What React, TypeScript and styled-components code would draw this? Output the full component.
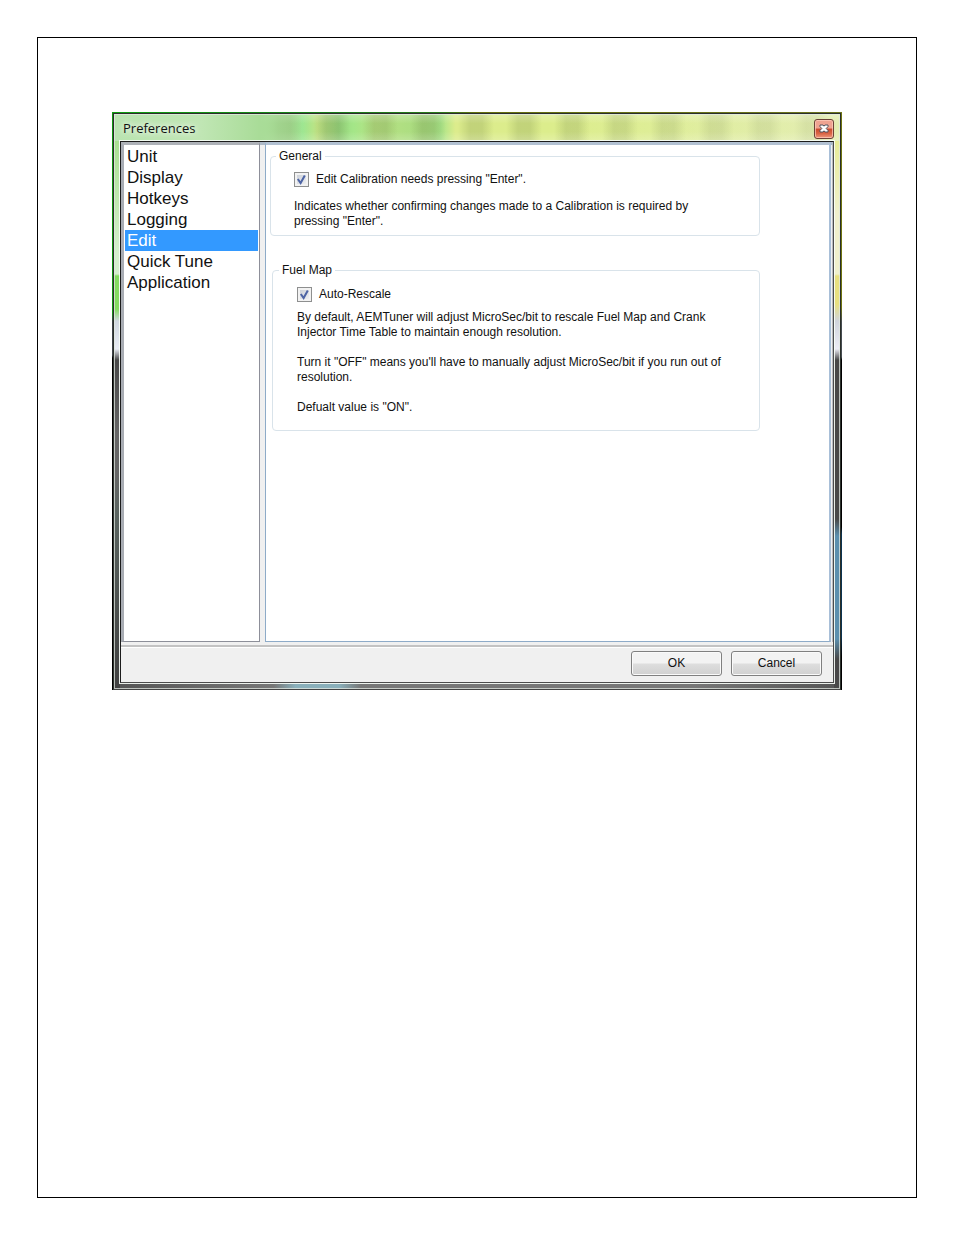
import React from "react";
import styled, { createGlobalStyle } from "styled-components";

const GlobalStyle = createGlobalStyle`
  *, *::before, *::after { box-sizing: border-box; }
  body {
    margin: 0;
    background: #fff;
    color: #111;
    font: 12px/15px "Liberation Sans", Arial, sans-serif;
  }
`;

const Sheet = styled.main`
  min-height: calc(100vh - 74px);
  margin: 37px;
  padding: 74px;
  border: 1px solid #000;
`;

/* The strip of desktop that shows around the translucent frame. */
const Backdrop = styled.div`
  padding: 1px 1px 0;
  background:
    linear-gradient(90deg, #0fa00f, #1c7c1c 30%, #2c7a1c 45%, #66700f 50%, #6c7420) top / 100% 1px no-repeat,
    linear-gradient(#0f960f 0 180px, #0f960f 200px, #3c4248 210px 243px, #000 246px) left / 50% 100% no-repeat,
    linear-gradient(#6f7410 0 195px, #454b50 210px 245px, #000 248px 415px, #0c3350 422px 525px, #000 545px) right / 50% 100% no-repeat;
`;

const Dialog = styled.section`
  border: 1px solid #2a2f2a;
  border-bottom-color: #444;
  padding: 0 6px 6px;
  box-shadow: inset 0 0 0 1px rgba(225, 232, 225, 0.75);
  background:
    linear-gradient(90deg, #b9e4b0 0, #c0e6b4 12%, #a9dc98 20%, transparent 27%) top left / 100% 27px no-repeat,
    linear-gradient(rgba(255, 255, 255, 0.25), transparent 35% 65%, rgba(255, 255, 255, 0.2)) top left / 100% 27px no-repeat,
    linear-gradient(90deg, transparent 60%, rgba(230, 236, 190, 0.6)) top left / 100% 27px no-repeat,
    repeating-linear-gradient(90deg, transparent 0 8px, rgba(90, 110, 50, 0.2) 20px 32px, transparent 44px 48px) top left / 100% 27px no-repeat,
    linear-gradient(90deg, #a4dc90 0, #a4dc90 24%, #9ce890 26%, #c0e284 28%, #98d880 31%, #a4e688 33%, #b8e284 36%, #a8dc80 43%, #a8e488 45%, #dcec8c 47%, #dcee8c 74%, #dfefa0) top left / 100% 27px no-repeat,
    linear-gradient(#a8e090 27px, #d4f0cc 140px 160px, #84dc60 162px 195px, #d0d8e0 207px, #e8ecf4 235px, #484848 246px, #666 320px 360px, #5a6460 400px, #404040) left / 6px 100% no-repeat,
    linear-gradient(#e8ec98 27px, #f0f0cc 100px 160px, #e8e080 162px 190px, #d0d4dc 207px, #ececf4 235px, #484848 246px 405px, #5b8fae 422px 525px, #484848 545px) right / 6px 100% no-repeat,
    linear-gradient(90deg, #555, #777 22%, #8ab0bb 25% 31%, #777 34% 80%, #555) bottom / 100% 6px no-repeat;
`;

const TitleBar = styled.header`
  display: flex;
  align-items: center;
  justify-content: space-between;
  height: 27px;
  padding-left: 3px;
`;

const Title = styled.h1`
  margin: 0;
  font: 400 13px/20px "Open Sans", "Noto Sans", sans-serif;
  color: #111;
  text-shadow: 0 0 6px #fff, 0 0 8px rgba(255, 255, 255, 0.7);
`;

const CloseButton = styled.button`
  display: grid;
  place-items: center;
  width: 20px;
  height: 20px;
  margin-top: 2px;
  padding: 0;
  border: 1px solid #6c4238;
  border-radius: 3px;
  background: linear-gradient(#efa391 0 45%, #c94a2e 50%, #d96445 75%, #ee987c);
  box-shadow: inset 0 0 0 1px rgba(255, 205, 190, 0.7);
`;

const Client = styled.div`
  border: 1px solid #1c1c1c;
  border-right-color: #4c4c4c;
  border-bottom-color: #4c4c4c;
  box-shadow: 0 0 0 1px rgba(250, 255, 250, 0.9);
  background: #f0f0f0;
`;

const Panels = styled.div`
  display: flex;
  gap: 5px;
  min-height: 500px;
  padding-right: 2px;
  background: #f0f0f0;
  box-shadow: inset 0 3px #adb9c7, inset -1px 0 #b8bcc2;
`;

const Categories = styled.nav`
  flex: 0 0 139px;
  padding: 1px;
  border: 1px solid #8d8f99;
  border-width: 3px 1px 1px 3px;
  border-top-color: #aeb2b8;
  border-left-color: #a9adb4;
  background: #fff;
`;

const CategoryLink = styled.a<{ $selected?: boolean }>`
  display: block;
  padding: 1px 0 0 2px;
  font-size: 17px;
  line-height: 20px;
  text-decoration: none;
  color: ${(p) => (p.$selected ? "#fff" : "#111")};
  background: ${(p) => (p.$selected ? "#3399ff" : "transparent")};
`;

const Settings = styled.div`
  flex: 1;
  min-width: 0;
  padding: 3px 69px 3px 4px;
  border: 1px solid #8eabc8;
  border-width: 3px 2px 1px 1px;
  border-top-color: #b2c1d2;
  border-right-color: #a8bfd8;
  background: #fff;
`;

const Group = styled.fieldset<{ $indent?: boolean }>`
  min-width: 0;
  margin: 0 0 26px ${(p) => (p.$indent ? 2 : 0)}px;
  padding: ${(p) => (p.$indent ? "8px 16px 15px 6px" : "7px 16px 6px 5px")};
  border: 1px solid #d9e3ea;
  border-radius: 4px;
`;

const Legend = styled.legend`
  padding: 0 3px;
  line-height: 16px;
`;

const GroupBody = styled.div<{ $gap: number }>`
  display: grid;
  gap: ${(p) => p.$gap}px;
  padding-left: 18px;
`;

const Option = styled.label`
  display: flex;
  align-items: center;
  gap: 7px;
  line-height: 16px;
`;

const TickBox = styled.span`
  display: grid;
  width: 15px;
  height: 15px;

  > * { grid-area: 1 / 1; }
  > svg { pointer-events: none; visibility: hidden; }
  > input:checked + svg { visibility: visible; }
`;

const TickInput = styled.input`
  appearance: none;
  width: 15px;
  height: 15px;
  margin: 0;
  border: 1px solid #8e8f8f;
  background: linear-gradient(135deg, #c6cbd3, #f4f5f7);
  box-shadow: inset 0 0 0 2px #f2f2f2;
`;

const Note = styled.p`
  margin: 0;
`;

const Footer = styled.footer`
  display: flex;
  justify-content: flex-end;
  gap: 9px;
  margin-top: 3px;
  padding: 4px 11px 6px;
  border-top: 2px solid #c3c3c3;
  box-shadow: inset 0 1px #fff;
`;

const PushButton = styled.button`
  width: 91px;
  height: 25px;
  padding: 0;
  border: 1px solid #808080;
  border-radius: 3px;
  background: linear-gradient(#f3f3f3 0 48%, #dedede 52%, #d0d0d0);
  box-shadow: inset 0 0 0 1px #fafafa;
  color: #111;
  font: inherit;
`;

const categories = ["Unit", "Display", "Hotkeys", "Logging", "Edit", "Quick Tune", "Application"];

function CheckOption({ label }: { label: string }) {
  return (
    <Option>
      <TickBox>
        <TickInput type="checkbox" defaultChecked />
        <svg width="15" height="15" viewBox="0 0 15 15" fill="none" aria-hidden="true">
          <path d="M3.8 7 6.6 11 10.8 3.4" stroke="#4d64a4" strokeWidth="2" />
        </svg>
      </TickBox>
      {label}
    </Option>
  );
}

export default function App() {
  return (
    <>
      <GlobalStyle />
      <Sheet>
        <Backdrop>
          <Dialog aria-labelledby="dialog-title">
            <TitleBar>
              <Title id="dialog-title">Preferences</Title>
              <CloseButton type="button" aria-label="Close">
                <svg width="10" height="9" viewBox="0 0 10 9" fill="none" aria-hidden="true">
                  <path d="M1 1H4L5 2.2 6 1H9V2.6L7.2 4.5 9 6.4V8H6L5 6.8 4 8H1V6.4L2.8 4.5 1 2.6Z" fill="#fff" stroke="#50535e" />
                </svg>
              </CloseButton>
            </TitleBar>
            <Client>
              <Panels>
                <Categories aria-label="Categories">
                  {categories.map((name) => (
                    <CategoryLink
                      key={name}
                      href="#"
                      $selected={name === "Edit"}
                      aria-current={name === "Edit" ? "page" : undefined}
                    >
                      {name}
                    </CategoryLink>
                  ))}
                </Categories>
                <Settings>
                  <Group>
                    <Legend>General</Legend>
                    <GroupBody $gap={12}>
                      <CheckOption label={'Edit Calibration needs pressing "Enter".'} />
                      <Note>
                        Indicates whether confirming changes made to a Calibration is required by
                        <br />
                        pressing "Enter".
                      </Note>
                    </GroupBody>
                  </Group>
                  <Group $indent>
                    <Legend>Fuel Map</Legend>
                    <GroupBody $gap={8}>
                      <CheckOption label="Auto-Rescale" />
                      <Note>
                        By default, AEMTuner will adjust MicroSec/bit to rescale Fuel Map and Crank
                        <br />
                        Injector Time Table to maintain enough resolution.
                        <br />
                        <br />
                        Turn it "OFF" means you'll have to manually adjust MicroSec/bit if you run out of
                        <br />
                        resolution.
                        <br />
                        <br />
                        Defualt value is "ON".
                      </Note>
                    </GroupBody>
                  </Group>
                </Settings>
              </Panels>
              <Footer>
                <PushButton type="button">OK</PushButton>
                <PushButton type="button">Cancel</PushButton>
              </Footer>
            </Client>
          </Dialog>
        </Backdrop>
      </Sheet>
    </>
  );
}
